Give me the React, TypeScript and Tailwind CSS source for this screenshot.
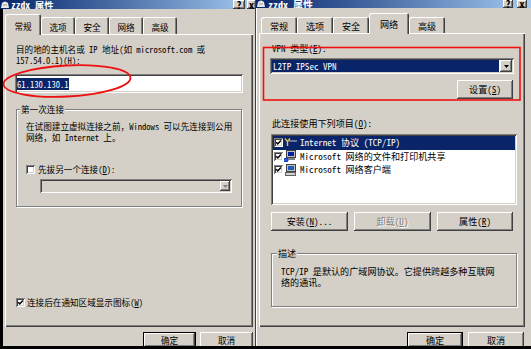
import React from "react";

const RAISED =
  "bg-[#d4d0c8] shadow-[inset_-1px_-1px_0_#404040,inset_1px_1px_0_#ffffff,inset_-2px_-2px_0_#808080]";
const SUNKEN =
  "shadow-[inset_1px_1px_0_#808080,inset_-1px_-1px_0_#ffffff,inset_2px_2px_0_#404040,inset_-2px_-2px_0_#d4d0c8]";
const PANEL =
  "bg-[#d4d0c8] shadow-[inset_1px_1px_0_#ffffff,inset_-1px_-1px_0_#404040,inset_-2px_-2px_0_#808080]";
const TAB =
  "bg-[#d4d0c8] rounded-t-[2px] shadow-[inset_1px_1px_0_#ffffff,inset_-1px_0_0_#404040,inset_-2px_0_0_#808080]";
const ETCHED = "border border-[#808080] shadow-[1px_1px_0_#ffffff,inset_1px_1px_0_#ffffff]";

function Tab({
  children,
  selected = false,
  className = "",
}: {
  children: React.ReactNode;
  selected?: boolean;
  className?: string;
}) {
  return (
    <div
      className={`${TAB} ${className} shrink-0 flex justify-center items-end whitespace-nowrap leading-[11px] ${
        selected ? "relative z-10 -mb-px" : ""
      }`}
    >
      {children}
    </div>
  );
}

function Btn({
  children,
  className = "",
  def = false,
  disabled = false,
}: {
  children: React.ReactNode;
  className?: string;
  def?: boolean;
  disabled?: boolean;
}) {
  return (
    <div className={`${className} ${def ? "border border-black" : ""} shrink-0 flex`}>
      <div
        className={`${RAISED} flex-1 flex items-center justify-center whitespace-nowrap leading-[11px] ${
          disabled ? "text-[#808080] [text-shadow:1px_1px_0_#ffffff]" : ""
        }`}
      >
        {children}
      </div>
    </div>
  );
}

function Check({ checked = false }: { checked?: boolean }) {
  return (
    <div className={`w-[9px] h-[9px] bg-white ${SUNKEN} shrink-0 flex`}>
      {checked && (
        <svg viewBox="0 0 9 9" className="w-[9px] h-[9px]">
          <path d="M2.2 4.2 L3.8 6 L6.9 2.6" stroke="#000" strokeWidth="1.5" fill="none" />
        </svg>
      )}
    </div>
  );
}

function Arrow({ disabled = false }: { disabled?: boolean }) {
  return (
    <svg width="5" height="3" viewBox="0 0 5 3">
      <path d="M0 0H5L2.5 3Z" fill={disabled ? "#808080" : "#000"} />
    </svg>
  );
}

function TitleBtn({ children, className = "" }: { children: React.ReactNode; className?: string }) {
  return (
    <div className={`${RAISED} ${className} h-full shrink-0 flex items-end justify-center overflow-hidden`}>
      <span className="text-[10px] font-bold leading-[10px] text-black -mb-[1px]">{children}</span>
    </div>
  );
}

function TitleIcon() {
  return (
    <svg width="10" height="9" viewBox="0 0 10 9" className="shrink-0">
      <path d="M1 8 L2 3 Q5 0 8 3 L9 8 Z" fill="#e8e8e8" />
      <path d="M3 5 H7" stroke="#a0a0a0" strokeWidth="1" />
    </svg>
  );
}

function TitleBar({ h, children }: { h: string; children: React.ReactNode }) {
  return (
    <div
      className={`${h} shrink-0 flex items-end overflow-hidden bg-linear-to-r from-[#0a246a] to-[#a6caf0]`}
    >
      {children}
    </div>
  );
}

function IconTcp() {
  return (
    <svg width="13" height="12" viewBox="0 0 13 12">
      <path d="M5 4 H13" stroke="#c8c8c8" strokeWidth="1" />
      <path d="M1 1.5 L3.5 4.5 L6 1.5" stroke="#e0c050" strokeWidth="1.4" fill="none" />
      <path d="M3.5 4.5 V9" stroke="#e0c050" strokeWidth="1.4" />
    </svg>
  );
}

function IconShare() {
  return (
    <svg width="13" height="12" viewBox="0 0 13 12">
      <rect x="2.5" y="0.5" width="9" height="7" fill="#c0c0c0" stroke="#404040" />
      <rect x="4" y="2" width="6" height="4" fill="#00209a" />
      <rect x="4" y="8" width="7" height="2" fill="#808080" />
      <path d="M0 8 H4 V12 H0 Z" fill="#1848d0" />
      <path d="M0 10 H5" stroke="#3060e0" strokeWidth="1" />
    </svg>
  );
}

function IconClient() {
  return (
    <svg width="13" height="12" viewBox="0 0 13 12">
      <rect x="2.5" y="0.5" width="9" height="7" fill="#c0c0c0" stroke="#404040" />
      <rect x="4" y="2" width="6" height="4" fill="#1c5cb8" />
      <rect x="1.5" y="8.5" width="10" height="3" fill="#d0d0d0" stroke="#606060" />
    </svg>
  );
}

function LeftDialog() {
  return (
    <div className="w-[256px] h-full shrink-0 flex flex-col text-[8.6px] text-black">
      <TitleBar h="h-[9px]">
        <TitleIcon />
        <span className="ml-[1px] text-white font-bold text-[9.5px] leading-[10px] -mb-[1px] whitespace-nowrap">
          zzdx 属性
        </span>
        <div className="ml-auto h-full flex gap-[2px]">
          <TitleBtn className="w-[12px]">?</TitleBtn>
          <TitleBtn className="w-[9px]">x</TitleBtn>
        </div>
      </TitleBar>
      <div className="flex-1 flex flex-col border-l-[3px] border-l-black border-r border-r-[#404040] px-[2px]">
        <div className="h-[25px] flex items-end">
          <Tab selected className="w-[36px] h-[21px] pb-[3px]">常规</Tab>
          <Tab className="w-[34px] h-[17px] pb-[1px]">选项</Tab>
          <Tab className="w-[34px] h-[17px] pb-[1px]">安全</Tab>
          <Tab className="w-[34px] h-[17px] pb-[1px]">网络</Tab>
          <Tab className="w-[34px] h-[17px] pb-[1px]">高级</Tab>
        </div>
        <div className={`${PANEL} h-[293px] w-[248px] flex flex-col pl-[11px] pt-[10px] leading-[11px]`}>
          <div className="whitespace-nowrap">目的地的主机名或 IP 地址(如 microsoft.com 或</div>
          <div className="whitespace-nowrap">
            157.54.0.1)(<u>H</u>):
          </div>
          <div className={`${SUNKEN} bg-white mt-[8px] -ml-[1px] w-[228px] h-[19px] shrink-0 flex items-center pl-[2px]`}>
            <span className="bg-[#0a246a] text-white leading-[12px] whitespace-nowrap">61.130.130.1</span>
          </div>
          <div className={`${ETCHED} relative mt-[16px] w-[226px] h-[98px] shrink-0 flex flex-col pl-[9px] pt-[11px]`}>
            <span className="absolute -top-[6px] left-[3px] px-[1px] bg-[#d4d0c8] whitespace-nowrap">第一次连接</span>
            <div className="whitespace-nowrap">在试图建立虚拟连接之前，Windows 可以先连接到公用</div>
            <div className="whitespace-nowrap">网络，如 Internet 上。</div>
            <div className="mt-[21px] h-[11px] flex items-center">
              <Check />
              <span className="ml-[3px] whitespace-nowrap">
                先拔另一个连接(<u>D</u>):
              </span>
            </div>
            <div className={`${SUNKEN} bg-[#d4d0c8] mt-[4px] ml-[14px] w-[192px] h-[14px] flex justify-end p-[2px]`}>
              <div className={`${RAISED} w-[10px] h-full flex items-center justify-center`}>
                <Arrow disabled />
              </div>
            </div>
          </div>
          <div className="mt-auto mb-[19px] h-[11px] flex items-center">
            <Check checked />
            <span className="ml-[2px] whitespace-nowrap">
              连接后在通知区域显示图标(<u>W</u>)
            </span>
          </div>
        </div>
        <div className="flex justify-end gap-[4px] mt-[5px]">
          <Btn def className="w-[53px] h-[16px]">确定</Btn>
          <Btn className="w-[53px] h-[16px]">取消</Btn>
        </div>
      </div>
    </div>
  );
}

function RightDialog() {
  const items = [
    { icon: <IconTcp />, text: "Internet 协议 (TCP/IP)", sel: true },
    { icon: <IconShare />, text: "Microsoft 网络的文件和打印机共享", sel: false },
    { icon: <IconClient />, text: "Microsoft 网络客户端", sel: false },
  ];
  return (
    <div className="w-[275px] h-full shrink-0 flex flex-col text-[9.1px] text-black">
      <TitleBar h="h-[8px]">
        <TitleIcon />
        <span className="ml-[2px] text-white font-bold text-[10px] leading-[10px] -mb-[2px] whitespace-nowrap">
          zzdx 属性
        </span>
        <div className="ml-auto mr-[4px] h-full flex gap-[4px]">
          <TitleBtn className="w-[10px]">?</TitleBtn>
          <TitleBtn className="w-[10px]">x</TitleBtn>
        </div>
      </TitleBar>
      <div className="flex-1 flex flex-col pl-[3px] pr-[6px] shadow-[inset_1px_0_0_#ffffff]">
        <div className="h-[25px] flex items-end pl-[2px]">
          <Tab className="w-[36px] h-[16px] pb-[1.5px]">常规</Tab>
          <Tab className="w-[36px] h-[16px] pb-[1.5px]">选项</Tab>
          <Tab className="w-[36px] h-[16px] pb-[1.5px]">安全</Tab>
          <Tab selected className="w-[40px] h-[21px] pb-[4px]">网络</Tab>
          <Tab className="w-[36px] h-[16px] pb-[1.5px]">高级</Tab>
        </div>
        <div className={`${PANEL} h-[294px] w-[266px] flex flex-col pl-[13px] pt-[10px] leading-[11px]`}>
          <div className="whitespace-nowrap">
            VPN 类型(<u>E</u>):
          </div>
          <div className={`${SUNKEN} bg-white mt-[4px] -ml-[2px] w-[244px] h-[16px] shrink-0 flex gap-[1px] p-[2px]`}>
            <div className="flex-1 bg-[#0a246a] text-white flex items-center pl-[1px] whitespace-nowrap">
              L2TP IPSec VPN
            </div>
            <div className={`${RAISED} w-[12px] h-full flex items-center justify-center`}>
              <Arrow />
            </div>
          </div>
          <div className="mt-[6px] flex justify-end mr-[12px]">
            <Btn className="w-[56px] h-[19px]">
              设置(<u>S</u>)
            </Btn>
          </div>
          <div className="mt-[19px] whitespace-nowrap">
            此连接使用下列项目(<u>O</u>):
          </div>
          <div className={`${SUNKEN} bg-white mt-[5px] -ml-[1px] w-[246px] h-[71px] shrink-0 flex flex-col p-[2px]`}>
            {items.map((it) => (
              <div
                key={it.text}
                className={`h-[13.5px] shrink-0 flex items-center pl-[1px] ${
                  it.sel ? "bg-[#0a246a] text-white" : ""
                }`}
              >
                <Check checked />
                <span className="ml-[1px] w-[13px] h-[12px] flex">{it.icon}</span>
                <span className="ml-[3px] whitespace-nowrap">{it.text}</span>
              </div>
            ))}
          </div>
          <div className="mt-[7px] -ml-[1px] flex gap-[6px]">
            <Btn className="w-[77px] h-[19px]">
              安装(<u>N</u>)...
            </Btn>
            <Btn disabled className="w-[77px] h-[19px]">
              卸载(<u>U</u>)
            </Btn>
            <Btn className="w-[76px] h-[19px]">
              属性(<u>R</u>)
            </Btn>
          </div>
          <div className={`${ETCHED} relative mt-[22px] -ml-[1px] w-[246px] h-[54px] shrink-0 flex flex-col pl-[9px] pt-[12px]`}>
            <span className="absolute -top-[6px] left-[5px] px-[1px] bg-[#d4d0c8] whitespace-nowrap">描述</span>
            <div className="whitespace-nowrap">TCP/IP 是默认的广域网协议。它提供跨越多种互联网</div>
            <div className="whitespace-nowrap">络的通讯。</div>
          </div>
        </div>
        <div className="flex justify-end gap-[5px] mt-[5px] mr-px">
          <Btn def className="w-[56px] h-[16px]">确定</Btn>
          <Btn className="w-[56px] h-[16px]">取消</Btn>
        </div>
      </div>
    </div>
  );
}

export default function App() {
  return (
    <div className="relative w-[531px] h-[349px] overflow-hidden flex flex-col bg-[#d4d0c8] [font-family:'Noto_Sans_Mono_CJK_SC','Noto_Sans_CJK_SC',monospace]">
      <div className="h-[346px] flex overflow-hidden">
        <LeftDialog />
        <RightDialog />
      </div>
      <div className="h-[3px] bg-black" />
      <svg className="absolute inset-0 pointer-events-none" width="531" height="349" viewBox="0 0 531 349">
        <ellipse
          cx="67"
          cy="81"
          rx="63.5"
          ry="15.5"
          fill="none"
          stroke="#ee1010"
          strokeWidth="1.8"
          transform="rotate(-3 67 81)"
        />
        <rect x="263.5" y="47.5" width="256.5" height="52.5" fill="none" stroke="#f01010" strokeWidth="1.6" />
      </svg>
    </div>
  );
}
